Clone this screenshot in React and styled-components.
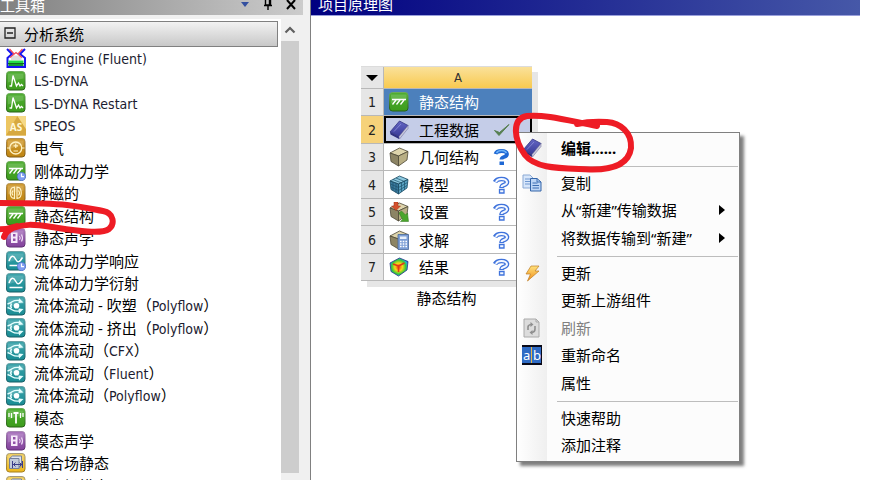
import React from "react";
import styled, { createGlobalStyle, css } from "styled-components";

const GlobalStyle = createGlobalStyle`
  * {
    box-sizing: border-box;
  }

  body {
    margin: 0;
    overflow: hidden;
    background: #fff;
    color: #000;
    font-family: "Noto Sans", "Noto Sans CJK SC", sans-serif;
    font-size: 15px;
  }

  button {
    border: 0;
    padding: 0;
    background: none;
    color: inherit;
    font: inherit;
    text-align: left;
  }
`;

const Gradient = ({ id, from, to }) => (
  <linearGradient id={id} x1="0" y1="0" x2="0" y2="1">
    <stop offset="0" stopColor={from} />
    <stop offset="1" stopColor={to} />
  </linearGradient>
);

const Tile = ({ tone }) => (
  <>
    <rect x="0.5" y="0.5" width="18.5" height="18.5" rx="3" fill={`url(#${tone})`} stroke={`url(#${tone}Edge)`} />
    <path d="M2 2.5h15.500v5q-8 1-15.500 4z" fill="#fff" opacity="0.16" />
  </>
);

const Clock = () => (
  <g>
    <circle cx="15.500" cy="15.500" r="4.200" fill="#7f9df0" stroke="#4468c8" strokeWidth="0.600" />
    <path d="M15.500 12.500v3.200h2.500" fill="none" stroke="#fff" strokeWidth="1.200" />
  </g>
);

const Hatch = () => (
  <path
    d="M3 7.500h14M7 8l-3.500 4.500M11 8l-3.500 4.500M15 8l-3.500 4.500"
    fill="none"
    stroke="#fff"
    strokeWidth="1.300"
  />
);

const Cube = ({ top, left, right, line = "#4c4836" }) => (
  <g stroke={line} strokeWidth="0.800" strokeLinejoin="round">
    <path d="M1 6l9.500-5L19 4.500 9.500 9z" fill={top} />
    <path d="M1 6l8.500 3v10L2 14.500z" fill={left} />
    <path d="M9.500 9L19 4.500 18 13l-8.500 6z" fill={right} />
  </g>
);

const Book = () => (
  <g strokeLinejoin="round">
    <path d="M1 12L10.500 1l8.500 4.500-9 11z" fill="url(#book)" stroke="#343580" strokeWidth="0.800" />
    <path d="M1 12l9 4.500v2.500L1.500 14.500z" fill="#2f3180" />
    <path d="M10 16.500l9-11v3L10.500 19z" fill="#c8c8da" stroke="#66679a" strokeWidth="0.500" />
    <path d="M5 11.500L12 4" stroke="#8d8fd8" strokeWidth="0.800" />
  </g>
);

const glyphs = {
  engine: (
    <>
      <path d="M1 1l5 5-4.500 4V19h17.500V10L14 6l5-5" fill="none" stroke="#1414f0" strokeWidth="2" />
      <path d="M5 9.500L8 7.500h4.500l3 2V12H5z" fill="#dcdcdc" />
      <path d="M3.500 1l5 5.500M16.500 1l-5 5.500M4 9.500L10 4.500l6 5" fill="none" stroke="#f04858" strokeWidth="1.300" />
      <path d="M2.500 12.500h15v3h-15z" fill="#22dd44" />
      <path d="M2.500 15.500h15V18h-15z" fill="#159a2c" />
      <path d="M2 15.500h16" stroke="#106820" strokeWidth="1" />
    </>
  ),
  dyna: (
    <>
      <Tile tone="green" />
      <path d="M3.500 15h2L7 4.500 10.500 15l2-3 1.500 3 1.500-1.500L17 15" fill="none" stroke="#fff" strokeWidth="1.300" />
    </>
  ),
  speos: (
    <>
      <path d="M0 0h20v19.500H0z" fill="#edc661" />
      <path d="M11.500 0L20 13v6.500H0z" fill="#d7a940" />
      <path d="M11.500 0H20v13z" fill="#f5d987" />
      <text x="10" y="14.500" textAnchor="middle" fill="#fff8d8" fontSize="10" fontWeight="700">
        AS
      </text>
    </>
  ),
  electric: (
    <>
      <Tile tone="gold" />
      <circle cx="9.750" cy="10" r="6" fill="none" stroke="#fff3c4" strokeWidth="1.300" />
      <path d="M3.700 10H1M16 10h2.500M7.500 7.800h4.500M9.750 5.500V10M7.500 13h4.500" stroke="#fff3c4" strokeWidth="1.200" />
    </>
  ),
  rigid: (
    <>
      <Tile tone="green" />
      <Hatch />
      <Clock />
    </>
  ),
  magnet: (
    <>
      <Tile tone="gold" />
      <path
        d="M8.500 3.500v12.500M11 3.500v12.500M8 4.500C3 3 3 16.500 8 15M11.500 4.500c5-1.500 5 12 0 10.500M7 7.500q-2 2.500 0 5M12.500 7.500q2 2.500 0 5"
        fill="none"
        stroke="#fff3c4"
        strokeWidth="1.200"
      />
    </>
  ),
  structural: (
    <>
      <Tile tone="green" />
      <Hatch />
    </>
  ),
  acoustic: (
    <>
      <Tile tone="purple" />
      <path d="M5 4.500h6.500V15H5z" fill="#f6eafa" />
      <path d="M7 6h2.500v2.500H7zM7 10.500h2.500V13H7z" fill="#9251a8" />
      <path d="M13.500 8q1.500 2 0 4M15.500 6.500q2 3.500 0 7" fill="none" stroke="#f0ddf5" strokeWidth="1.200" />
    </>
  ),
  waveClock: (
    <>
      <Tile tone="teal" />
      <path d="M3 10C5 4 7.500 4 9.500 8s4 3.500 7-1.500M3.500 14.500h13" fill="none" stroke="#fff" strokeWidth="1.500" />
      <Clock />
    </>
  ),
  wave: (
    <>
      <Tile tone="teal" />
      <path d="M3 10C5 4 7.500 4 9.500 8s4 3.500 7-1.500M3.500 14.500h13" fill="none" stroke="#fff" strokeWidth="1.500" />
    </>
  ),
  flow: (
    <>
      <Tile tone="teal" />
      <circle cx="10.500" cy="9.800" r="2.800" fill="#fff" />
      <path
        d="M1.500 8Q4.500 7 6.500 5.500T14 4.500M1.500 11.500Q4.500 12.500 6.500 14T14 15M5.500 7.500q-1.500 2.300 0 4.600"
        fill="none"
        stroke="#e5ffff"
        strokeWidth="1.500"
      />
      <path d="M13 2l4.500 4.500-5 .5zM13 17.500l4.500-4.500-5-.5z" fill="#e5ffff" />
    </>
  ),
  modal: (
    <>
      <Tile tone="green" />
      <path d="M3 5v4M5.500 5v5M14.500 5v5M17 5v4" stroke="#fff" strokeWidth="1.300" />
      <path d="M7.500 5h5M10 5v10.500" stroke="#fff" strokeWidth="1.800" />
    </>
  ),
  coupled: (
    <>
      <Tile tone="yellow" />
      <path d="M3.500 5.500l3-2.500h9v9.500L13 15.500" fill="#dfe4ee" stroke="#75809a" />
      <path d="M3.500 5.500h9.500v10H3.500z" fill="#c2cbdc" stroke="#75809a" />
      <path d="M6.500 8v7M16.500 8v7M7 11.500h9M9.500 9.500l-2 2 2 2M13.500 9.500l2 2-2 2" fill="none" stroke="#3b3c8a" strokeWidth="1" />
    </>
  ),
  book: <Book />,
  geometry: <Cube top="#ddd4ac" left="#8c8464" right="#b8ae84" />,
  mesh: (
    <>
      <Cube top="#8cc8df" left="#397a9e" right="#5ba3c3" line="#184860" />
      <path
        d="M4 4.500l8.500 3.500M7 3l8.500 3.500M4 7v8.500M7 8v9.500M12.500 7.500V17M15.500 6v9M1.500 9l8 3.500 9-5M2 12l7.500 3.500 8.500-5"
        fill="none"
        stroke="#1d526c"
        strokeWidth="0.700"
      />
    </>
  ),
  setup: (
    <>
      <Cube top="#ddd4ac" left="#8c8464" right="#b8ae84" />
      <path d="M5 0h4v4h2.500L7 8.500 2.500 4H5z" fill="#d4502c" stroke="#9c3014" strokeWidth="0.500" />
      <path d="M10 11l2.500-2 4 4 2-2 1 8.500h-8l2-2z" fill="#4ba52c" stroke="#2c7418" strokeWidth="0.500" />
    </>
  ),
  solution: (
    <>
      <Cube top="#ddd4ac" left="#8c8464" right="#b8ae84" />
      <path d="M9 4.500h10.500v15H9z" fill="#7d9fd6" stroke="#48689c" strokeWidth="0.800" />
      <path d="M11 6.500h6.500v2.500H11z" fill="#e9f1fc" />
      <path d="M11 11.500h7M11 14h7M11 16.500h7" stroke="#fff" strokeWidth="1.400" strokeDasharray="1.600 1.100" />
    </>
  ),
  results: (
    <>
      <path d="M1 6l9.500-5L19 4.500 18 13l-8.500 6L2 14.500z" fill="url(#contour)" stroke="#263080" strokeWidth="0.800" />
      <path d="M9.500 9L4 7M9.500 9L15.500 6M9.500 9v6" stroke="#e03818" strokeWidth="1.600" />
    </>
  ),
  copy: (
    <>
      <path d="M1 2h7l3 3v10H1z" fill="#d7e6fa" stroke="#8ba9d4" />
      <path d="M3 6h5M3 8.500h5M3 11h5" stroke="#6e97d0" />
      <path d="M8.500 5.500h6.500L19 9v9H8.500z" fill="#bcd5f6" stroke="#3465a8" />
      <path d="M15 5.500V9h4M10.500 10h5M10.500 12.500h6.500M10.500 15h6.500" fill="none" stroke="#3b6db2" />
    </>
  ),
  bolt: (
    <path d="M9 3h8l-4 5h4L5.500 18l3-7H4z" fill="url(#bolt)" stroke="#bd7d24" strokeWidth="0.700" strokeLinejoin="round" />
  ),
  refresh: (
    <>
      <path d="M2 1h12l3 3v15H2z" fill="#dcdcdc" stroke="#aaa" />
      <path d="M14 1v3h3" fill="none" stroke="#aaa" />
      <path d="M6 12V9q0-2 3-2.500M13 8v3q0 3-3 3.500" fill="none" stroke="#8f8f8f" strokeWidth="1.600" />
      <path d="M8.500 4l3 2.500-3 2.500zM10.500 12l-3 2.500 3 2.500z" fill="#8f8f8f" />
    </>
  ),
  rename: (
    <>
      <path d="M0 0h20v20H0z" fill="#0a0a18" />
      <path d="M0 2h19v16H0z" fill="#2f6bc4" />
      <text x="1" y="14.500" fill="#fff" fontSize="13">
        a
      </text>
      <text x="11" y="14.500" fill="#fff" fontSize="13">
        b
      </text>
      <path d="M9.500 2v16" stroke="#e6b74c" />
    </>
  ),
  check: <path d="M2.500 10.500l4.500 5L17 4.500l-9.500 8z" fill="#567f50" stroke="#567f50" strokeLinejoin="round" />,
  questionFull: (
    <>
      <path d="M3.500 7Q4.500 4 9.500 4t5.500 3q0 2-3 3-2.500 .8-2.500 2.500" fill="none" stroke="#1f68d4" strokeWidth="3.800" />
      <path d="M4.500 6Q6 3.500 9.500 3.500t5 2.500" fill="none" stroke="#6cb2f8" strokeWidth="1.500" />
      <path d="M7.500 14.500H12V18H7.500z" fill="#1f68d4" />
    </>
  ),
  question: (
    <>
      <path d="M3 7Q4.500 4 9.500 4t5.500 3q0 2-3 3-2.500 .8-2.500 3" fill="none" stroke="#3f73dc" strokeWidth="4.600" />
      <path d="M4 7Q5 4 9.500 4t5.500 3q0 2-3 3-2.500 .8-2.500 2" fill="none" stroke="#f4f8ff" strokeWidth="2" />
      <path d="M7.500 14.500h4.500v3.500H7.500z" fill="#f4f8ff" stroke="#3f73dc" strokeWidth="1.300" />
    </>
  ),
};

const Icon = ({ name }) => (
  <svg width="20" height="20" viewBox="0 0 20 20" aria-hidden="true">
    {glyphs[name]}
  </svg>
);

const SharedDefs = () => (
  <HiddenSvg width="0" height="0" aria-hidden="true">
    <defs>
      <Gradient id="green" from="#4fae32" to="#3d9c1c" />
      <Gradient id="greenEdge" from="#6cab58" to="#255f12" />
      <Gradient id="gold" from="#d09a30" to="#bf8512" />
      <Gradient id="goldEdge" from="#b49254" to="#805a10" />
      <Gradient id="purple" from="#a873bd" to="#83429c" />
      <Gradient id="purpleEdge" from="#a98ab4" to="#5c2a70" />
      <Gradient id="teal" from="#3ba3aa" to="#188c94" />
      <Gradient id="tealEdge" from="#68a0a4" to="#125c64" />
      <Gradient id="yellow" from="#f0cf62" to="#edb81c" />
      <Gradient id="yellowEdge" from="#a39a7c" to="#a47d1c" />
      <Gradient id="book" from="#6466c4" to="#393b97" />
      <Gradient id="bolt" from="#ffe27c" to="#f08c18" />
      <radialGradient id="contour" cx="0.480" cy="0.500" r="0.600">
        <stop offset="0" stopColor="#f03c14" />
        <stop offset="0.350" stopColor="#f8d818" />
        <stop offset="0.650" stopColor="#38c838" />
        <stop offset="0.850" stopColor="#20b0e0" />
        <stop offset="1" stopColor="#2038c8" />
      </radialGradient>
    </defs>
  </HiddenSvg>
);

const systems = [
  ["engine", "IC Engine (Fluent)"],
  ["dyna", "LS-DYNA"],
  ["dyna", "LS-DYNA Restart"],
  ["speos", "SPEOS"],
  ["electric", "电气"],
  ["rigid", "刚体动力学"],
  ["magnet", "静磁的"],
  ["structural", "静态结构"],
  ["acoustic", "静态声学"],
  ["waveClock", "流体动力学响应"],
  ["wave", "流体动力学衍射"],
  ["flow", "流体流动 - 吹塑（Polyflow）"],
  ["flow", "流体流动 - 挤出（Polyflow）"],
  ["flow", "流体流动（CFX）"],
  ["flow", "流体流动（Fluent）"],
  ["flow", "流体流动（Polyflow）"],
  ["modal", "模态"],
  ["acoustic", "模态声学"],
  ["coupled", "耦合场静态"],
  ["coupled", "耦合场模态"],
];

const cells = [
  { icon: "structural", label: "静态结构", kind: "title" },
  { icon: "book", label: "工程数据", status: "check", kind: "selected" },
  { icon: "geometry", label: "几何结构", status: "questionFull" },
  { icon: "mesh", label: "模型", status: "question" },
  { icon: "setup", label: "设置", status: "question" },
  { icon: "solution", label: "求解", status: "question" },
  { icon: "results", label: "结果", status: "question" },
];

const menuGroups = [
  [{ icon: "book", label: "编辑......", bold: true }],
  [
    { icon: "copy", label: "复制" },
    { label: "从“新建”传输数据", submenu: true },
    { label: "将数据传输到“新建”", submenu: true },
  ],
  [
    { icon: "bolt", label: "更新" },
    { label: "更新上游组件" },
    { icon: "refresh", label: "刷新", disabled: true },
    { icon: "rename", label: "重新命名" },
    { label: "属性" },
  ],
  [{ label: "快速帮助" }, { label: "添加注释" }],
];

// Latin runs are set smaller than the Chinese text around them
const MixedText = ({ children }) =>
  children
    .split(/([A-Za-z][A-Za-z ()-]*)/)
    .map((part, i) => (i % 2 ? <Latin key={i}>{part}</Latin> : part));

const Toolbox = () => (
  <ToolboxPanel>
    <ToolboxTitle>
      <span>工具箱</span>
      <TitleButtons>
        <button type="button" aria-label="菜单">
          <svg width="10" height="16" viewBox="0 0 10 16">
            <path d="M1 6h8L5 11z" fill="#3450a0" />
          </svg>
        </button>
        <button type="button" aria-label="固定">
          <svg width="10" height="16" viewBox="0 0 10 16">
            <path d="M2.500 1h5v8h-5zM1 9.500h8M5 9.500V14M6.500 1v8" fill="none" stroke="#000" strokeWidth="1.400" />
          </svg>
        </button>
        <button type="button" aria-label="关闭">
          <svg width="10" height="16" viewBox="0 0 10 16">
            <path d="M1 4l8 9M9 4l-8 9" stroke="#000" strokeWidth="2" />
          </svg>
        </button>
      </TitleButtons>
    </ToolboxTitle>
    <ToolboxBody>
      <ToolboxList>
        <GroupHeader type="button">
          <svg width="12" height="12" viewBox="0 0 12 12">
            <path d="M1 1h10v10H1zM3 6h6" fill="none" stroke="#222" strokeWidth="1.300" />
          </svg>
          分析系统
        </GroupHeader>
        <SystemList>
          {systems.map(([icon, label]) => (
            <SystemRow key={label}>
              <Icon name={icon} />
              <span>
                <MixedText>{label}</MixedText>
              </span>
            </SystemRow>
          ))}
        </SystemList>
      </ToolboxList>
      <ScrollTrack>
        <svg width="12" height="8" viewBox="0 0 12 8">
          <path d="M1.500 6.500L6 2l4.500 4.500" fill="none" stroke="#606060" strokeWidth="2.200" />
        </svg>
        <ScrollThumb />
      </ScrollTrack>
    </ToolboxBody>
    <RowMark width="122" height="50" viewBox="0 195 122 50" aria-hidden="true">
      <path d="M-4 203C20 203 50 203 67 205S92 209 103 211C114 213 115 224 109 229C101 235 72 230 52 227S24 224 13 228Q6 231 4 237M-4 229Q6 230 17 226" />
    </RowMark>
  </ToolboxPanel>
);

const SystemBlock = () => (
  <Block>
    <BlockTable>
      <thead>
        <tr>
          <CornerCell>
            <svg width="12" height="6" viewBox="0 0 12 6">
              <path d="M0 0h12L6 6z" />
            </svg>
          </CornerCell>
          <ColumnCell>A</ColumnCell>
        </tr>
      </thead>
      <tbody>
        {cells.map(({ icon, label, status, kind }, i) => (
          <BlockRow key={label}>
            <NumberCell $active={kind === "selected"}>{i + 1}</NumberCell>
            <DataCell $kind={kind}>
              <CellContent>
                <Icon name={icon} />
                <CellLabel>{label}</CellLabel>
                {status && <Icon name={status} />}
              </CellContent>
            </DataCell>
          </BlockRow>
        ))}
      </tbody>
    </BlockTable>
    <BlockName>静态结构</BlockName>
  </Block>
);

const ContextMenu = () => (
  <Menu>
    {menuGroups.map((group, i) => (
      <MenuGroup key={i}>
        {group.map(({ icon, label, bold, disabled, submenu }) => (
          <MenuItem key={label} type="button" disabled={disabled} $bold={bold}>
            <MenuIcon>{icon && <Icon name={icon} />}</MenuIcon>
            <MenuLabel>{label}</MenuLabel>
            {submenu && (
              <svg width="6" height="10" viewBox="0 0 6 10">
                <path d="M0 0l6 5-6 5z" />
              </svg>
            )}
          </MenuItem>
        ))}
      </MenuGroup>
    ))}
  </Menu>
);

const App = () => (
  <Window>
    <GlobalStyle />
    <SharedDefs />
    <Toolbox />
    <Schematic>
      <SchematicTitle>项目原理图</SchematicTitle>
      <Canvas>
        <SystemBlock />
        <ContextMenu />
        <MenuMark width="130" height="64" viewBox="508 110 130 64" aria-hidden="true">
          <path d="M597 126C570 121 545 114 527 116C511 119 514 140 525 155C536 169 560 168 590 169.500C617 170 629 162 631 148C632 132 620 123 607 122Q590 121 577 124" />
        </MenuMark>
      </Canvas>
    </Schematic>
  </Window>
);

const HiddenSvg = styled.svg`
  position: absolute;
`;

/* the top edge of both title bars runs off the window */
const Window = styled.div`
  display: flex;
  height: calc(100vh + 7px);
  margin-top: -7px;
  background: #f0f0f0;
`;

const ToolboxPanel = styled.section`
  position: relative;
  display: flex;
  flex-direction: column;
  flex: none;
  width: 303px;
`;

const ToolboxTitle = styled.header`
  display: flex;
  flex: none;
  align-items: center;
  justify-content: space-between;
  height: 22px;
  padding-right: 7px;
  background: linear-gradient(to right, #808080, #cccccc);
  color: #fff;
`;

const TitleButtons = styled.div`
  display: flex;
  gap: 13px;

  button,
  svg {
    display: block;
  }
`;

const ToolboxBody = styled.div`
  display: flex;
  flex: 1;
  min-height: 0;
  padding: 4px 4px 0 0;
`;

const ToolboxList = styled.div`
  flex: 1;
  overflow: hidden;
  padding-top: 2px;
  background: #fff;
`;

const GroupHeader = styled.button`
  display: flex;
  align-items: center;
  gap: 8px;
  width: calc(100% - 3px);
  height: 26px;
  padding: 0 0 2px 4px;
  border: 1px solid #808080;
  border-left: 0;
  background: linear-gradient(#f2f2f2, #c8c8c8);
`;

const SystemList = styled.ul`
  margin: 0;
  padding: 0;
  list-style: none;
`;

const SystemRow = styled.li`
  display: flex;
  align-items: center;
  gap: 8px;
  height: 22px;
  padding-left: 6px;
  line-height: 22px;
  white-space: nowrap;

  &:nth-child(even) {
    height: 23px;
  }

  svg {
    flex: none;
  }
`;

const Latin = styled.span`
  color: #1c1c30;
  font-family: "DejaVu Sans Condensed", "DejaVu Sans", sans-serif;
  font-size: 14px;
`;

const ScrollTrack = styled.div`
  display: flex;
  flex-direction: column;
  align-items: center;
  width: 18px;
  padding: 7px 0;
  background: #f0f0f0;
`;

const ScrollThumb = styled.div`
  flex: 1;
  width: 100%;
  margin-top: 7px;
  background: #cdcdcd;
`;

const markStroke = css`
  position: absolute;
  pointer-events: none;

  path {
    fill: none;
    stroke: #ee1c25;
    stroke-width: 6px;
    stroke-linecap: round;
  }
`;

const RowMark = styled.svg`
  ${markStroke}
  top: 202px;
  left: 0;
`;

const MenuMark = styled.svg`
  ${markStroke}
  top: 94px;
  left: 197px;
`;

const Schematic = styled.main`
  display: flex;
  flex: 1;
  flex-direction: column;
  min-width: 0;
  margin-left: 7px;
  border-left: 1px solid #808080;
  background: #fff;
`;

const SchematicTitle = styled.header`
  flex: none;
  height: 23px;
  margin-right: 15px;
  padding-left: 7px;
  border-bottom: 1px solid #9aa0dc;
  background: linear-gradient(to right, #000080, #4658a8);
  color: #fff;
  line-height: 22px;
`;

const Canvas = styled.div`
  position: relative;
  flex: 1;
  padding: 50px;
`;

const Block = styled.figure`
  width: 171px;
  margin: 0;
`;

const BlockTable = styled.table`
  width: 100%;
  border-top: 1px solid #dcdcdc;
  border-spacing: 0;
  box-shadow: 6px 6px 0 #e6e6e6;
  table-layout: fixed;

  th,
  td {
    padding: 0;
    border-bottom: 1px solid #b8b8b8;
  }
`;

const CornerCell = styled.th`
  width: 23px;
  height: 22px;
  border-right: 1px solid #b8b8b8;
  background: #e6e6e6;
  line-height: 0;
`;

const ColumnCell = styled.th`
  background: linear-gradient(#fae19a, #f8ca50);
  color: #333;
  font-family: "DejaVu Sans Condensed", "DejaVu Sans", sans-serif;
  font-size: 13px;
  font-weight: 400;
  line-height: 20px;
`;

const BlockRow = styled.tr`
  height: 27px;

  &:nth-child(even) {
    height: 28px;
  }
`;

const NumberCell = styled.td`
  border-right: 1px solid #b8b8b8;
  background: ${(props) => (props.$active ? "#f6d27a" : "#e6e6e6")};
  color: #222;
  font-family: "DejaVu Sans Condensed", "DejaVu Sans", sans-serif;
  font-size: 14px;
  line-height: 20px;
  text-align: center;
`;

const cellKinds = {
  title: css`
    background: #4c80bc;
    color: #fff;
  `,
  selected: css`
    background: #c5cde8;
    box-shadow: inset 0 0 0 2px #000;
  `,
};

const DataCell = styled.td`
  background: #fff;
  ${(props) => cellKinds[props.$kind]}
`;

const CellContent = styled.div`
  display: flex;
  align-items: center;
  gap: 10px;
  padding: 0 20px 0 5px;
  line-height: 20px;
`;

const CellLabel = styled.span`
  flex: 1;
  white-space: nowrap;
`;

const BlockName = styled.figcaption`
  padding-top: 6px;
  line-height: 22px;
  text-align: center;
`;

const Menu = styled.div`
  position: absolute;
  top: 116px;
  left: 205px;
  width: 224px;
  padding: 2px 1px 1px 0;
  border: 1px solid #808080;
  background: linear-gradient(to right, #fff, #efefef 30px, #fcfcfc 30px);
  box-shadow: 4px 4px 3px rgba(0, 0, 0, 0.5);
`;

const MenuGroup = styled.div`
  & + &::before {
    content: "";
    display: block;
    height: 1px;
    margin: 4px 0 3px 40px;
    background: #bdbdbd;
  }
`;

const MenuItem = styled.button`
  display: flex;
  align-items: center;
  width: 100%;
  height: 27px;
  padding: 0 13px 2px 0;
  font-weight: ${(props) => (props.$bold ? 700 : 400)};
  line-height: 22px;

  &:nth-child(even) {
    height: 28px;
  }

  &:disabled {
    color: #808080;
  }
`;

const MenuIcon = styled.span`
  display: flex;
  width: 44px;
  padding-left: 5px;
`;

const MenuLabel = styled.span`
  flex: 1;
  white-space: nowrap;
`;

export default App;
